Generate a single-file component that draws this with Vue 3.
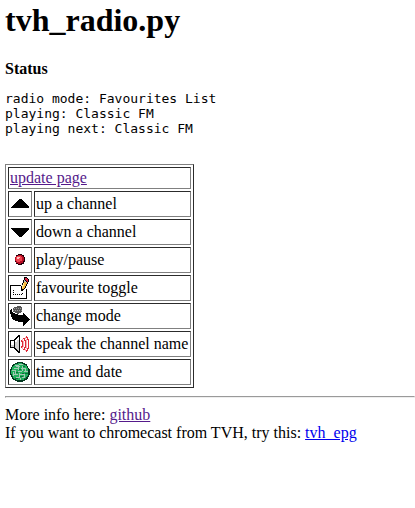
<script setup>
const rows = [
  { icon: 'up', label: 'up a channel' },
  { icon: 'down', label: 'down a channel' },
  { icon: 'ball', label: 'play/pause' },
  { icon: 'edit', label: 'favourite toggle' },
  { icon: 'mode', label: 'change mode' },
  { icon: 'sound', label: 'speak the channel name' },
  { icon: 'globe', label: 'time and date' }
]
</script>

<template>
  <main class="page">
    <h1>tvh_radio.py</h1>
    <h4>Status</h4>
    <pre>radio mode: Favourites List
playing: Classic FM
playing next: Classic FM</pre>
    <table>
      <tbody>
        <tr>
          <td colspan="2"><a class="visited" href="#">update page</a></td>
        </tr>
        <tr v-for="row in rows" :key="row.icon">
          <td class="icon-cell">
            <svg class="icon" viewBox="0 0 20 22" width="20" height="22">
              <path v-if="row.icon === 'up'" d="M9 6h2l8 8v1H1v-1z" />
              <path v-else-if="row.icon === 'down'" d="M1 7h18v1l-8 8H9L1 8z" />
              <g v-else-if="row.icon === 'ball'">
                <path fill="#200008" d="M8 5h4v1h2v2h1v5h-1v2h-2v1H8v-1H6v-2H5V8h1V6h2z" />
                <path fill="#b80c24" d="M8 6h4v1h1v1h1v4h-1v2h-2v1H8v-1H6v-2H5V8h1V7h2z" />
                <path fill="#f04450" d="M7 7h4v1h1v4h-2v1H7v-1H6V8h1z" />
                <path fill="#ffc0c0" d="M7 8h3v1H9v1H7z" />
              </g>
              <g v-else-if="row.icon === 'edit'">
                <path fill="none" stroke="#000" d="M11 8.500H.5V21.500H16.500V12" />
                <path fill="none" stroke="#000" stroke-dasharray="1 1" d="M3.500 13v4.500h9v-3" />
                <path fill="#000" d="M14 0h3v1h1v1h1v3h-1v2h-1v2h-1v2h-1v1h-1v1h-1v1h-2V9h1V6h1V3h1z" />
                <path fill="#f8b83c" d="M14 4h1v1h1v1h1v1h-1v2h-1v2h-1v1h-2V8h1V6h1z" />
                <path fill="#ffe890" d="M13 6h1v3h-1v2h-1V8h1z" />
                <path fill="#d82040" d="M15 1h2v1h1v3h-1V4h-1V3h-1z" />
                <path fill="#bbb" d="M14 3h1v1h1v1h1v1h-1V5h-2z" />
              </g>
              <g v-else-if="row.icon === 'mode'">
                <path fill="#000" d="M1 4h1v3h1v1h2v1h3v1h5V8h1v1h1v1h1v1h1v1h1v1h1v1h1v1h-1v1h-1v1h-1v1h-1v1h-1v1h-1v1h-1v-4H8v-1H5v-1H3v-1H2v-2H1V9H0V5h1z" />
                <path fill="#555" d="M4 2h3V1h4v1h1v5h-1v1H9v1H7V8H5V7H3V3h1z" />
                <path fill="none" stroke="#999" stroke-dasharray="1 1" d="M4 3.500h8M3 5.500h9" />
              </g>
              <g v-else-if="row.icon === 'sound'">
                <path fill="#000" d="M8 2h2v18H8v-1H7v-1H6v-1H5v-1H4v-1H0V7h4V6h1V5h1V4h1V3h1z" />
                <path fill="#fff" d="M1 8h3v6H1zM5 7h1V6h1V5h1V4h1v3H7v2H5z" />
                <path fill="#d0d0d0" d="M5 9h2V7h2v11H8v-1H7v-1H6v-1H5zM1 12h3v2H1z" />
                <path fill="none" stroke="#f4a0a0" stroke-width=".8" d="M12.500 6Q15.500 11 12.500 16M15.500 4Q18.500 11 15.500 18" />
                <path fill="none" stroke="#e02838" stroke-width="1.300" d="M11.500 7Q14 11 11.500 15M14 5Q17 11 14 17M16.500 3Q21 11 16.500 19" />
              </g>
              <g v-else>
                <path fill="#043820" d="M7 1h6v1h2v1h2v2h1v2h1v1h1v6h-1v2h-1v2h-1v1h-2v1h-2v1H7v-1H5v-1H3v-1H2v-2H1v-2H0V8h1V6h1V4h1V3h2V2h2z" />
                <circle cx="9.800" cy="10.800" r="8.700" fill="#22b05c" />
                <path class="grid" d="M5 4.500h3M9 3.500h4M6 5.500h4M4 7.500h4M11 7.500h5M2 9.500h4M8 10.500h4M14 10.500h4M4 13.500h4M10 13.500h4M6 16.500h4M12 16.500h3M8.500 4v5M12.500 5v5M5.500 9v4M15.500 8v3M9.500 12v4M14.500 13v3M3.500 11v4M10.500 17v2" />
                <path class="land" d="M13 5h2v1h-2zM6 11h2v1H6zM12 12h2v1h-2zM9 8h2v1H9zM10 15h3v1h-3zM15 12h3v1h-3zM14 17h2v1h-2zM5 17h3v1H5z" />
              </g>
            </svg>
          </td>
          <td>{{ row.label }}</td>
        </tr>
      </tbody>
    </table>
    <hr />
    <div class="line">More info here: <a class="visited" href="#">github</a></div>
    <div class="line">If you want to chromecast from TVH, try this: <a href="#">tvh_epg</a></div>
  </main>
</template>

<style>
body {
  background: #fff;
}
</style>

<style scoped>
.page {
  padding: 2px 0 0 5px;
  color: #000;
  font: 16px/18px "Liberation Serif", serif;
}
h1 {
  margin: 0 0 21px;
  font-size: 32px;
  line-height: 37px;
}
h4 {
  margin: 0 0 13px;
  font-size: 16px;
  line-height: 18px;
}
pre {
  margin: 0 0 28px;
  font: 13px/15px "DejaVu Sans Mono", monospace;
}
table {
  box-sizing: border-box;
  width: 189px;
  border: 1px solid;
  border-color: #808080 #2c2c2c #2c2c2c #808080;
  border-collapse: separate;
  border-spacing: 2px;
}
td {
  border: 1px solid;
  border-color: #2c2c2c #808080 #808080 #2c2c2c;
  padding: 1px;
  vertical-align: middle;
  white-space: nowrap;
}
.icon-cell {
  width: 20px;
}
a {
  color: #0000ee;
}
.visited {
  color: #551a8b;
}
.icon {
  display: block;
  shape-rendering: crispEdges;
}
.grid {
  fill: none;
  stroke: #a4c8b4;
  stroke-width: 1;
}
.land {
  fill: #087038;
}
hr {
  margin: 8px 0;
  border: 1px solid;
  border-color: #9a9a9a #eee #eee #9a9a9a;
}
</style>
